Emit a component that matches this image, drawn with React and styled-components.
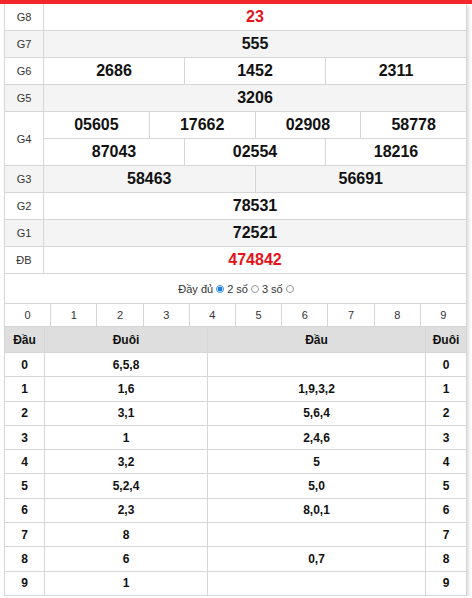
import React from 'react';
import styled, { createGlobalStyle } from 'styled-components';

const GlobalStyle = createGlobalStyle`
  html, body { margin: 0; padding: 0; background: #fff; }
  body { font-family: "Liberation Sans", Arial, sans-serif; color: #222; }
`;

const TopBar = styled.div` height: 4px; background: #f3262d; `;

const Box = styled.div`
  box-sizing: border-box; width: 463px; margin-left: 4px;
  border-left: 1px solid #d6d6d6; border-right: 1px solid #d6d6d6;
  box-shadow: 2px 2px 3px rgba(0, 0, 0, 0.13);
`;

const PrizeRow = styled.div`
  display: grid; grid-template-columns: 39px 1fr;
  background: ${({ $alt }) => ($alt ? '#f4f4f4' : '#fff')};
  border-bottom: 1px solid #d6d6d6;
`;

const Label = styled.div`
  display: flex; align-items: center; justify-content: center;
  border-right: 1px solid #d6d6d6; font-size: 11px; color: #333;
`;

const Values = styled.div` display: flex; flex-direction: column; `;

const ValueLine = styled.div`
  display: flex; height: 26px;
  & + & { border-top: 1px solid #d6d6d6; }
`;

const Num = styled.div`
  flex: 1; display: flex; align-items: center; justify-content: center;
  font-size: 16px; font-weight: 700; color: ${({ $red }) => ($red ? '#e5131b' : '#111')};
  & + & { border-left: 1px solid #d6d6d6; }
`;

const Options = styled.div`
  height: 29px; display: flex; align-items: center; justify-content: center;
  gap: 2px; font-size: 11px; color: #333; padding-left: 2px;
`;

const Radio = styled.span`
  box-sizing: border-box; display: inline-block; width: 8px; height: 8px; border-radius: 50%;
  border: 1px solid ${({ $on }) => ($on ? '#3b8ee6' : '#9a9a9a')};
  background: ${({ $on }) => ($on ? 'radial-gradient(circle, #1f7fe0 0 2.3px, #fff 2.6px)' : '#fff')};
  margin: 0 1px;
`;

const DigitRow = styled.div`
  display: flex; border-top: 1px solid #d6d6d6; border-bottom: 1px solid #d6d6d6;
`;

const Digit = styled.div`
  flex: 1; height: 22px; display: flex; align-items: center; justify-content: center;
  font-size: 11px; color: #333;
  & + & { border-left: 1px solid #d6d6d6; }
`;

const StatRow = styled.div`
  display: grid; grid-template-columns: 39px 163px 218px 1fr;
  border-bottom: 1px solid #d6d6d6;
  background: ${({ $head }) => ($head ? '#dedede' : '#fff')};
  height: ${({ $head }) => ($head ? '25px' : '23.3px')};
`;

const StatCell = styled.div`
  display: flex; align-items: center; justify-content: center;
  font-size: 12px; font-weight: 700; color: #111;
  & + & { border-left: 1px solid #d6d6d6; }
`;

const prizes = [
  { label: 'G8', lines: [['23']], red: true },
  { label: 'G7', lines: [['555']] },
  { label: 'G6', lines: [['2686', '1452', '2311']] },
  { label: 'G5', lines: [['3206']] },
  { label: 'G4', lines: [['05605', '17662', '02908', '58778'], ['87043', '02554', '18216']] },
  { label: 'G3', lines: [['58463', '56691']] },
  { label: 'G2', lines: [['78531']] },
  { label: 'G1', lines: [['72521']] },
  { label: 'ĐB', lines: [['474842']], red: true },
];

const stats = [
  ['0', '6,5,8', '', '0'],
  ['1', '1,6', '1,9,3,2', '1'],
  ['2', '3,1', '5,6,4', '2'],
  ['3', '1', '2,4,6', '3'],
  ['4', '3,2', '5', '4'],
  ['5', '5,2,4', '5,0', '5'],
  ['6', '2,3', '8,0,1', '6'],
  ['7', '8', '', '7'],
  ['8', '6', '0,7', '8'],
  ['9', '1', '', '9'],
];

export default function App() {
  return (
    <>
      <GlobalStyle />
      <TopBar />
      <Box>
        {prizes.map((p, i) => (
          <PrizeRow key={p.label} $alt={i % 2 === 1}>
            <Label>{p.label}</Label>
            <Values>
              {p.lines.map((line, j) => (
                <ValueLine key={j}>
                  {line.map((n) => <Num key={n} $red={p.red}>{n}</Num>)}
                </ValueLine>
              ))}
            </Values>
          </PrizeRow>
        ))}

        <Options>
          Đầy đủ <Radio $on /> 2 số <Radio /> 3 số <Radio />
        </Options>

        <DigitRow>
          {Array.from({ length: 10 }, (_, i) => <Digit key={i}>{i}</Digit>)}
        </DigitRow>

        <StatRow $head>
          <StatCell>Đầu</StatCell>
          <StatCell>Đuôi</StatCell>
          <StatCell>Đầu</StatCell>
          <StatCell>Đuôi</StatCell>
        </StatRow>
        {stats.map((r) => (
          <StatRow key={r[0]}>
            {r.map((c, k) => <StatCell key={k}>{c}</StatCell>)}
          </StatRow>
        ))}
      </Box>
    </>
  );
}
